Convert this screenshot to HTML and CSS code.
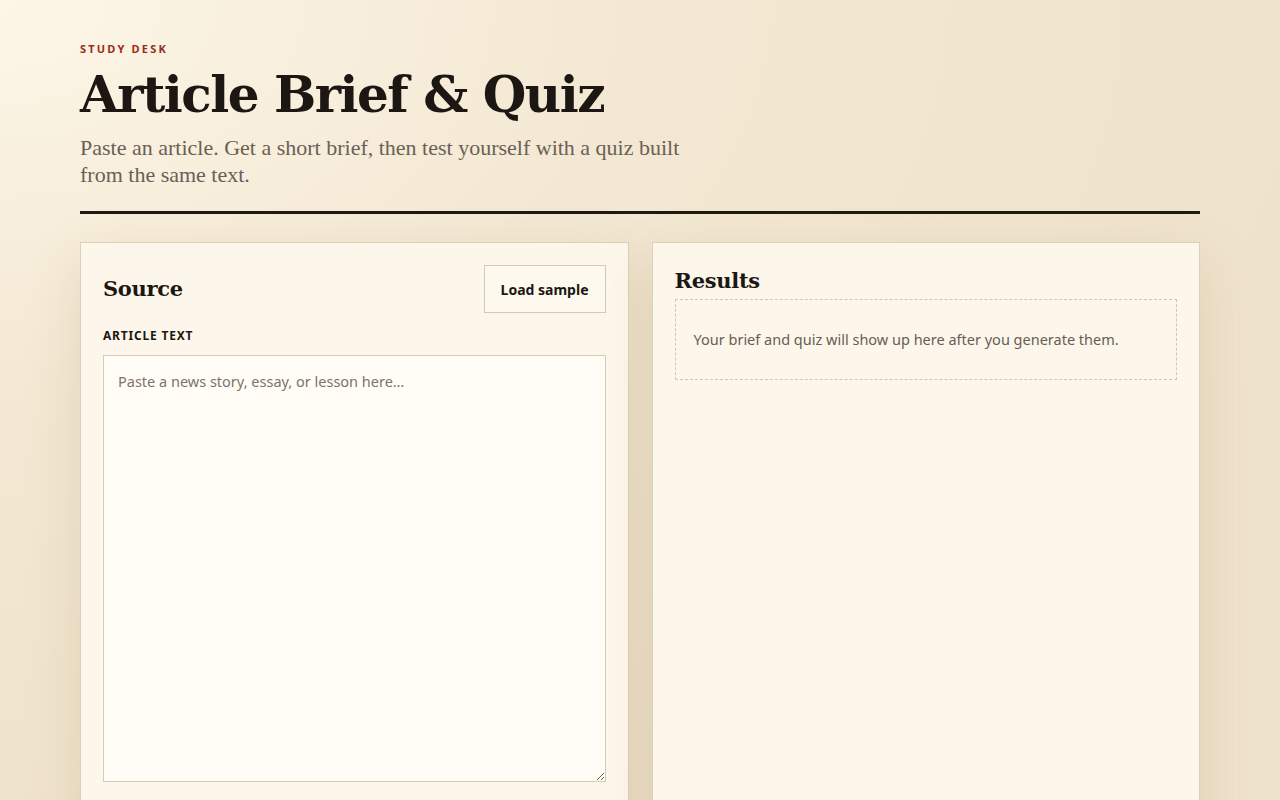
FILE: index.html
```html
<!DOCTYPE html>
<html lang="en">
<head>
<meta charset="utf-8">
<title>Article Brief &amp; Quiz</title>
<link rel="stylesheet" href="styles.css">
</head>
<body>
<div class="page">
  <header class="masthead">
    <div class="eyebrow">STUDY DESK</div>
    <h1 class="title">Article Brief &amp; Quiz</h1>
    <p class="lede">Paste an article. Get a short brief, then test yourself with a quiz built from the same text.</p>
  </header>
  <main class="grid">
    <section class="panel">
      <div class="panel-head">
        <h2 class="panel-title">Source</h2>
        <button class="btn" type="button">Load sample</button>
      </div>
      <label class="field-label" for="article">ARTICLE TEXT</label>
      <textarea id="article" class="textarea" placeholder="Paste a news story, essay, or lesson here…"></textarea>
    </section>
    <section class="panel">
      <h2 class="panel-title results-title">Results</h2>
      <div class="empty">Your brief and quiz will show up here after you generate them.</div>
    </section>
  </main>
</div>
</body>
</html>
```

FILE: styles.css
```css
html, body {
  margin: 0;
  padding: 0;
}
body {
  min-height: 800px;
  background: radial-gradient(ellipse 1400px 900px at 0 0, #fdf6e7 0%, #f3e8d3 45%, #efe2cb 100%);
  font-family: "Source Sans Pro", "Noto Sans", "Liberation Sans", sans-serif;
  color: #1c1712;
  overflow: hidden;
}
.page {
  width: 1120px;
  margin: 0 auto;
  padding-top: 42px;
}
.eyebrow {
  font-family: "Noto Sans", sans-serif;
  font-size: 11px;
  font-weight: 700;
  letter-spacing: 2.2px;
  color: #9b2c1c;
  line-height: 14px;
}
.title {
  font-family: "DejaVu Serif", "Liberation Serif", serif;
  font-weight: 700;
  font-size: 50px;
  letter-spacing: -1.5px;
  line-height: 60px;
  margin: 9px 0 0 0;
  color: #1c1712;
}
.lede {
  font-family: "Liberation Serif", serif;
  font-size: 22px;
  line-height: 27px;
  color: #6b6056;
  max-width: 612px;
  margin: 9px 0 0 0;
}
.masthead {
  border-bottom: 3px solid #1f1a14;
  padding-bottom: 23px;
}
.grid {
  display: grid;
  grid-template-columns: 1fr 1fr;
  gap: 23px;
  margin-top: 28px;
}
.panel {
  background: #fdf7eb;
  border: 1px solid #ddd0b6;
  padding: 22px 22px 0 22px;
  height: 600px;
  box-shadow: 0 18px 50px rgba(150, 120, 70, 0.18);
}
.panel-head {
  display: flex;
  justify-content: space-between;
  align-items: center;
}
.panel-title {
  font-family: "DejaVu Serif", "Liberation Serif", serif;
  font-weight: 700;
  font-size: 21px;
  letter-spacing: -0.3px;
  line-height: 28px;
  margin: 0;
  color: #1c1712;
}
.btn {
  font-family: "Noto Sans", sans-serif;
  font-size: 14px;
  font-weight: 700;
  color: #1c1712;
  background: #fdf9ef;
  border: 1px solid #d6cbb2;
  height: 48px;
  padding: 0 16px;
  border-radius: 0;
}
.field-label {
  display: block;
  font-family: "Noto Sans", sans-serif;
  font-size: 12px;
  font-weight: 700;
  letter-spacing: 0.8px;
  color: #1c1712;
  margin-top: 15px;
  line-height: 16px;
}
.textarea {
  display: block;
  box-sizing: border-box;
  width: 100%;
  height: 427px;
  margin-top: 11px;
  background: #fffdf6;
  border: 1px solid #d5cbb6;
  border-radius: 0;
  padding: 15px 14px;
  font-family: "Noto Sans", sans-serif;
  font-size: 14.5px;
  line-height: 20px;
  color: #1c1712;
  resize: vertical;
  outline: none;
}
.textarea::placeholder {
  color: #7d736a;
}
.results-title {
  margin-top: 1px;
  line-height: 30px;
}
.empty {
  margin-top: 3px;
  border: 1px dashed #cfc6b4;
  padding: 29px 18px;
  font-family: "Noto Sans", sans-serif;
  font-size: 14.5px;
  line-height: 21px;
  color: #675d54;
}
```
